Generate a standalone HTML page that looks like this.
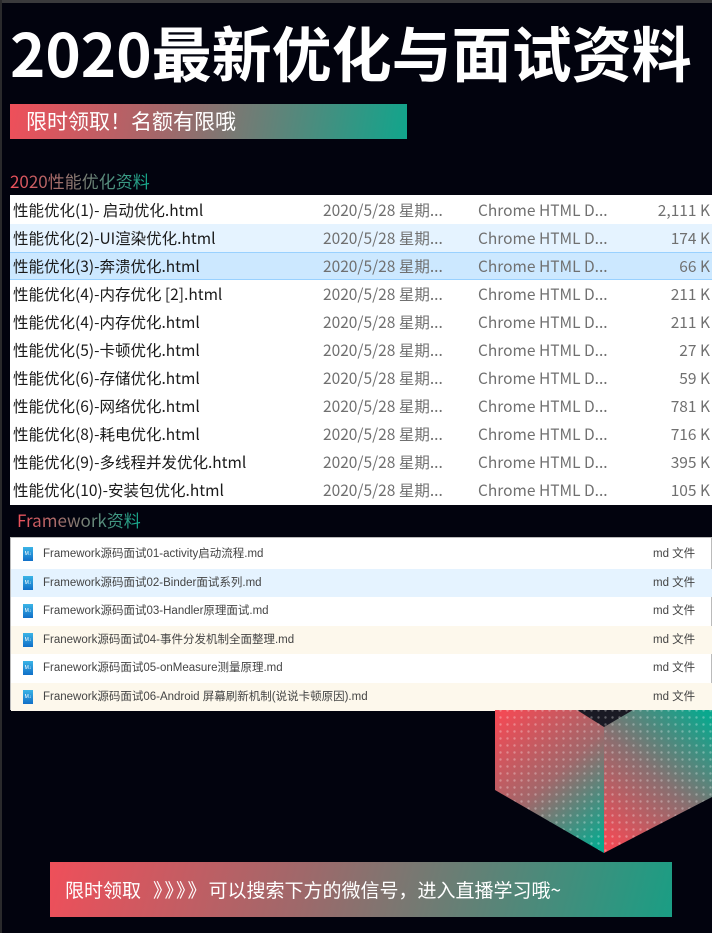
<!DOCTYPE html>
<html><head><meta charset="utf-8"><style>
*{margin:0;padding:0;box-sizing:border-box}
body{width:712px;height:933px;background:#02030e;position:relative;overflow:hidden;font-family:"Liberation Sans","Noto Sans CJK SC",sans-serif}
.frame-t{position:absolute;left:0;top:0;width:712px;height:3px;background:#3a3a3c}
.frame-l{position:absolute;left:0;top:0;width:2px;height:933px;background:#2a2a2c}
.title{position:absolute;left:10px;top:12px;font-size:60px;font-weight:bold;color:#fff;letter-spacing:0;white-space:nowrap;line-height:80px;font-family:"Noto Sans CJK SC",sans-serif}
.b1{position:absolute;left:10px;top:104px;width:397px;height:35px;background:linear-gradient(100deg,#ef4f5a 0%,#a0686a 40%,#11a58c 100%);color:#fff;font-size:21px;line-height:35px;padding-left:16px;font-family:"Noto Sans CJK SC",sans-serif}
.h{position:absolute;font-size:17px;font-family:"Noto Sans CJK SC",sans-serif;background:linear-gradient(90deg,#ef4f5a,#12a98c);-webkit-background-clip:text;background-clip:text;color:transparent;white-space:nowrap}
.t1{position:absolute;left:10px;top:195px;width:702px;height:310px;background:#fff}
.r{position:absolute;left:0;width:702px;height:28px;font-size:15.5px;line-height:28px;color:#1a1a1a;font-family:"Noto Sans CJK SC",sans-serif;white-space:nowrap}
.r span{position:absolute;top:0}
.r .d,.r .c,.r .s{color:#707070}
.t2{position:absolute;left:10px;top:537px;width:702px;height:173px;background:#fff;border:1px solid #bbb}
.q{position:absolute;left:0;width:702px;height:28.5px;font-size:11.5px;line-height:28.5px;color:#444;white-space:nowrap;font-family:"Liberation Sans","Noto Sans CJK SC",sans-serif}
.q i{position:absolute;left:12px;top:7px;width:10px;height:14px;background:linear-gradient(#3ab4e6,#1170c8);font-style:normal;font-size:5px;color:#fff;line-height:14px;text-align:center}
.q .n{position:absolute;left:32px}
.q .m{position:absolute;left:642px}
.b2{position:absolute;left:50px;top:862px;width:622px;height:55px;background:linear-gradient(105deg,#ef4f5a 0%,#a0686a 40%,#1a9e84 100%);color:#fff;font-size:19px;line-height:55px;padding-left:15px;font-family:"Noto Sans CJK SC",sans-serif;white-space:nowrap}
.b2 .ch{letter-spacing:2px;margin-left:12px}
</style></head><body>
<div class="frame-t"></div><div class="frame-l"></div>
<div class="title">2020最新优化与面试资料</div>
<div class="b1">限时领取！名额有限哦</div>
<div class="h" style="left:10px;top:168px">2020性能优化资料</div>
<div class="t1">
<div class="r" style="top:1px"><span style="left:3px">性能优化(1)- 启动优化.html</span><span class="d" style="left:313px">2020/5/28 星期...</span><span class="c" style="left:468px">Chrome HTML D...</span><span class="s" style="right:2px">2,111 K</span></div>
<div class="r" style="top:29px;background:#e5f3ff"><span style="left:3px">性能优化(2)-UI渲染优化.html</span><span class="d" style="left:313px">2020/5/28 星期...</span><span class="c" style="left:468px">Chrome HTML D...</span><span class="s" style="right:2px">174 K</span></div>
<div class="r" style="top:57px;background:#cce8ff;border-top:1px solid #99d1ff;border-bottom:1px solid #99d1ff;line-height:26px"><span style="left:3px">性能优化(3)-奔溃优化.html</span><span class="d" style="left:313px">2020/5/28 星期...</span><span class="c" style="left:468px">Chrome HTML D...</span><span class="s" style="right:2px">66 K</span></div>
<div class="r" style="top:85px"><span style="left:3px">性能优化(4)-内存优化 [2].html</span><span class="d" style="left:313px">2020/5/28 星期...</span><span class="c" style="left:468px">Chrome HTML D...</span><span class="s" style="right:2px">211 K</span></div>
<div class="r" style="top:113px"><span style="left:3px">性能优化(4)-内存优化.html</span><span class="d" style="left:313px">2020/5/28 星期...</span><span class="c" style="left:468px">Chrome HTML D...</span><span class="s" style="right:2px">211 K</span></div>
<div class="r" style="top:141px"><span style="left:3px">性能优化(5)-卡顿优化.html</span><span class="d" style="left:313px">2020/5/28 星期...</span><span class="c" style="left:468px">Chrome HTML D...</span><span class="s" style="right:2px">27 K</span></div>
<div class="r" style="top:169px"><span style="left:3px">性能优化(6)-存储优化.html</span><span class="d" style="left:313px">2020/5/28 星期...</span><span class="c" style="left:468px">Chrome HTML D...</span><span class="s" style="right:2px">59 K</span></div>
<div class="r" style="top:197px"><span style="left:3px">性能优化(6)-网络优化.html</span><span class="d" style="left:313px">2020/5/28 星期...</span><span class="c" style="left:468px">Chrome HTML D...</span><span class="s" style="right:2px">781 K</span></div>
<div class="r" style="top:225px"><span style="left:3px">性能优化(8)-耗电优化.html</span><span class="d" style="left:313px">2020/5/28 星期...</span><span class="c" style="left:468px">Chrome HTML D...</span><span class="s" style="right:2px">716 K</span></div>
<div class="r" style="top:253px"><span style="left:3px">性能优化(9)-多线程并发优化.html</span><span class="d" style="left:313px">2020/5/28 星期...</span><span class="c" style="left:468px">Chrome HTML D...</span><span class="s" style="right:2px">395 K</span></div>
<div class="r" style="top:281px"><span style="left:3px">性能优化(10)-安装包优化.html</span><span class="d" style="left:313px">2020/5/28 星期...</span><span class="c" style="left:468px">Chrome HTML D...</span><span class="s" style="right:2px">105 K</span></div>
</div>
<div class="h" style="left:17px;top:507px">Framework资料</div>
<div class="t2">
<div class="q" style="top:2px"><i>M↓</i><span class="n">Framework源码面试01-activity启动流程.md</span><span class="m">md 文件</span></div>
<div class="q" style="top:30.5px;background:#e5f3ff"><i>M↓</i><span class="n">Framework源码面试02-Binder面试系列.md</span><span class="m">md 文件</span></div>
<div class="q" style="top:59px"><i>M↓</i><span class="n">Framework源码面试03-Handler原理面试.md</span><span class="m">md 文件</span></div>
<div class="q" style="top:87.5px;background:#fdf8ec"><i>M↓</i><span class="n">Franework源码面试04-事件分发机制全面整理.md</span><span class="m">md 文件</span></div>
<div class="q" style="top:116px"><i>M↓</i><span class="n">Franework源码面试05-onMeasure测量原理.md</span><span class="m">md 文件</span></div>
<div class="q" style="top:144.5px;background:#fdf8ec"><i>M↓</i><span class="n">Franework源码面试06-Android 屏幕刷新机制(说说卡顿原因).md</span><span class="m">md 文件</span></div>
</div>
<svg style="position:absolute;left:0;top:0" width="712" height="933">
<defs>
<linearGradient id="gl" x1="495" y1="720" x2="604" y2="840" gradientUnits="userSpaceOnUse"><stop offset="0" stop-color="#f24a55"/><stop offset="0.5" stop-color="#a2676a"/><stop offset="1" stop-color="#0aa88e"/></linearGradient>
<linearGradient id="gr" x1="712" y1="720" x2="604" y2="840" gradientUnits="userSpaceOnUse"><stop offset="0" stop-color="#0aa88e"/><stop offset="0.5" stop-color="#8a6f70"/><stop offset="1" stop-color="#f24a55"/></linearGradient>
<pattern id="dots" width="7" height="7" patternUnits="userSpaceOnUse"><circle cx="3.5" cy="3.5" r="1.2" fill="#fff" fill-opacity="0.3"/></pattern>
</defs>
<polygon points="577,710 633,710 604,727" fill="#1a1a24"/>
<polygon points="495,710 577,710 604,727 604,853 495,790" fill="url(#gl)"/>
<polygon points="604,727 633,710 712,710 712,797 604,853" fill="url(#gr)"/>
<polygon points="495,710 712,710 712,797 604,853 495,790" fill="url(#dots)"/>
</svg>
<div class="b2">限时领取<span class="ch">》》》》</span>可以搜索下方的微信号，进入直播学习哦~</div>
</body></html>
